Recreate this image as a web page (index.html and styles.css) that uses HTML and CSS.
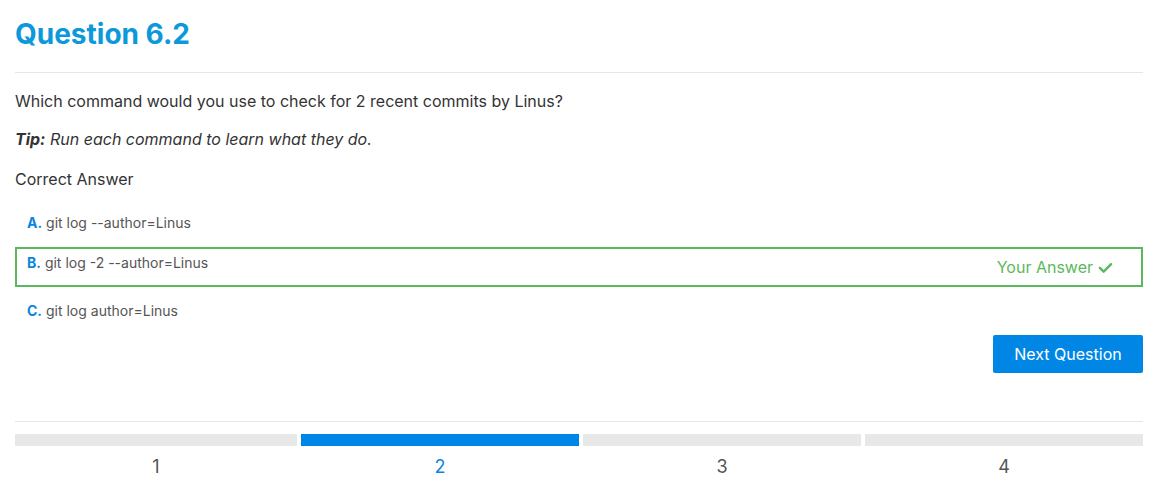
FILE: index.html
```html
<!DOCTYPE html>
<html lang="en">
<head>
<meta charset="utf-8">
<title>Question 6.2</title>
<link rel="stylesheet" href="styles.css">
</head>
<body>
<main class="quiz">
  <h2 class="title">Question 6.2</h2>
  <hr class="rule">
  <p class="question">Which command would you use to check for 2 recent commits by Linus?</p>
  <p class="tip"><b>Tip:</b> Run each command to learn what they do.</p>
  <p class="status">Correct Answer</p>
  <ul class="options">
    <li class="option"><span class="opt-text"><span class="letter">A.</span> git log --author=Linus</span></li>
    <li class="option chosen"><span class="opt-text"><span class="letter">B.</span> git log -2 --author=Linus</span>
      <span class="yours">Your Answer
        <svg class="check" viewBox="0 0 16 16" width="15" height="15"><path d="M2 8.5l4 4L14 4.5" fill="none" stroke="currentColor" stroke-width="2.6" stroke-linecap="round" stroke-linejoin="round"/></svg>
      </span>
    </li>
    <li class="option"><span class="opt-text"><span class="letter">C.</span> git log author=Linus</span></li>
  </ul>
  <div class="actions"><button class="next">Next Question</button></div>
  <hr class="rule rule-bottom">
  <div class="progress">
    <div class="step"><div class="bar"></div><div class="num">1</div></div>
    <div class="step active"><div class="bar"></div><div class="num">2</div></div>
    <div class="step"><div class="bar"></div><div class="num">3</div></div>
    <div class="step"><div class="bar"></div><div class="num">4</div></div>
  </div>
</main>
</body>
</html>
```
FILE: styles.css
```css
* { box-sizing: border-box; }
html, body { margin: 0; padding: 0; background: #fff; }
body {
  font-family: Inter, "Noto Sans", "Liberation Sans", sans-serif;
  color: #333;
  font-size: 16px;
}
.quiz { padding: 0 11px 0 15px; }
.title {
  margin: 0;
  padding-top: 16px;
  font-size: 28px;
  line-height: 36px;
  font-weight: 700;
  color: #0b99dc;
}
.rule {
  border: 0;
  border-top: 1px solid #e6e6e6;
  margin: 20px 0 0;
}
.question { margin: 17px 0 0; line-height: 22px; }
.tip { margin: 16px 0 0; line-height: 22px; font-style: italic; }
.tip b { font-weight: 700; }
.status { margin: 18px 0 0; line-height: 22px; }
.options { list-style: none; margin: 17px 0 0; padding: 0; }
.option {
  border: 2px solid transparent;
  padding: 4px 10px;
  margin-bottom: 8px;
  font-size: 14px;
  line-height: 20px;
  color: #555;
  display: flex;
  justify-content: space-between;
  align-items: flex-start;
}
.option.chosen { border-color: #5cb85c; }
.letter { color: #0a85e0; font-weight: 700; }
.yours {
  font-size: 16px;
  line-height: 28px;
  color: #5cb85c;
  padding-right: 18px;
  display: flex;
  align-items: center;
  gap: 5px;
}
.check { display: block; }
.actions { display: flex; justify-content: flex-end; }
.next {
  font-family: inherit;
  font-size: 16px;
  color: #fff;
  background: #0087e6;
  border: 0;
  border-radius: 2px;
  width: 150px;
  height: 38px;
  padding: 0;
}
.rule-bottom { margin-top: 48px; }
.progress { display: grid; grid-template-columns: repeat(4, 1fr); margin-top: 12px; }
.step { padding-left: 4px; min-width: 0; }
.step:first-child { padding-left: 0; }
.bar { height: 12px; background: #e8e8e8; }
.step.active .bar { background: #0087e6; }
.num {
  text-align: center;
  font-size: 18px;
  line-height: 24px;
  margin-top: 9px;
  color: #555;
}
.step.active .num { color: #0a85e0; }
```
